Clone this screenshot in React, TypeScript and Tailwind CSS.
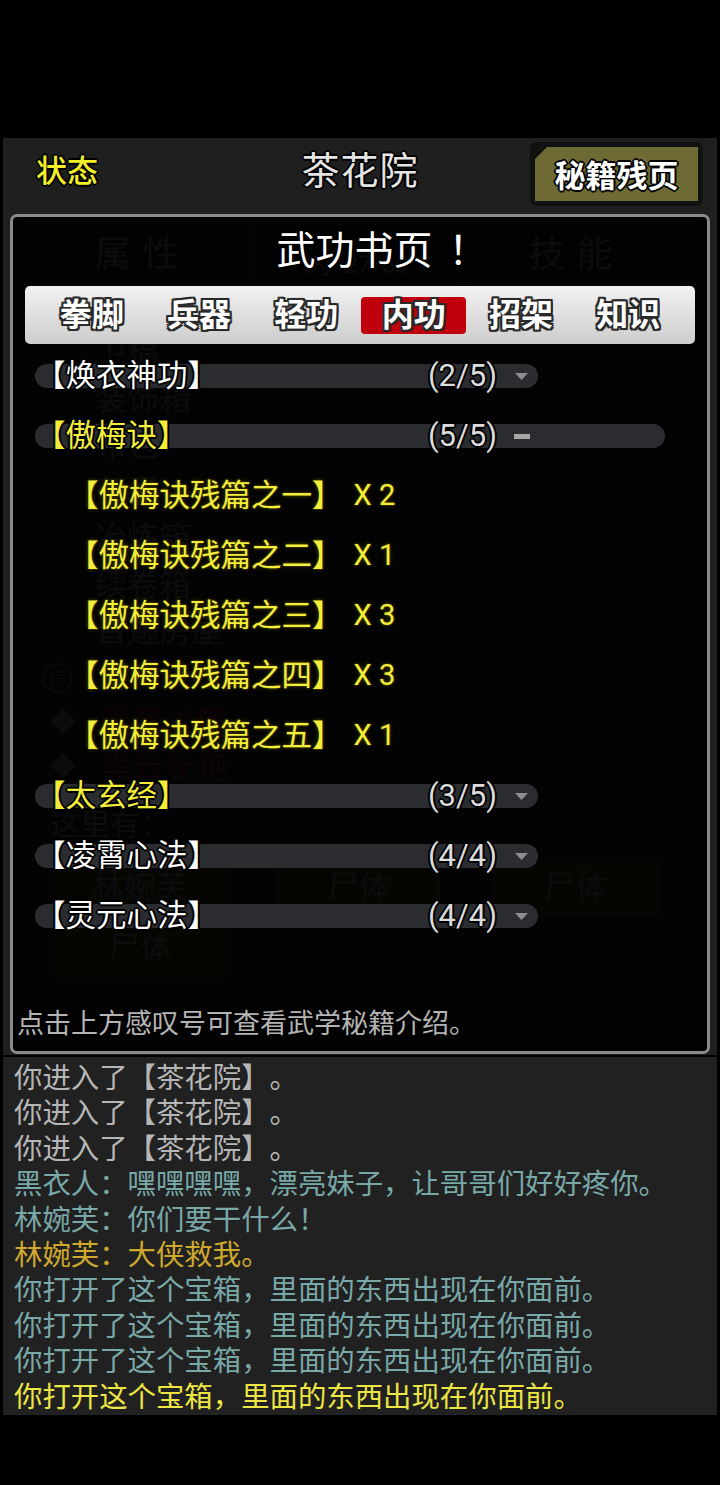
import React from 'react';

// outlines
const OUT_BLACK =
  '[text-shadow:2px_0_0_#000,-2px_0_0_#000,0_2px_0_#000,0_-2px_0_#000,1px_1px_0_#000,-1px_-1px_0_#000,1px_-1px_0_#000,-1px_1px_0_#000]';
const OUT_TAB =
  '[text-shadow:2px_0_0_#2a2a2a,-2px_0_0_#2a2a2a,0_2px_0_#2a2a2a,0_-2px_0_#2a2a2a,2px_2px_0_#2a2a2a,-2px_-2px_0_#2a2a2a,2px_-2px_0_#2a2a2a,-2px_2px_0_#2a2a2a,0_0_3px_#2a2a2a]';
const OUT_SOFT =
  '[text-shadow:1px_0_0_#000,-1px_0_0_#000,0_1px_0_#000,0_-1px_0_#000,0_0_3px_#000]';
const OUT_YELLOW =
  '[text-shadow:1px_0_0_#2b2600,-1px_0_0_#2b2600,0_1px_0_#2b2600,0_-1px_0_#2b2600,0_0_4px_#4a4200]';

const TABS = ['拳脚', '兵器', '轻功', '内功', '招架', '知识'];

type Row = { name: string; count: string; yellow: boolean; open?: boolean; subs?: [string, string][] };

const ROWS: Row[] = [
  { name: '【焕衣神功】', count: '(2/5)', yellow: false },
  {
    name: '【傲梅诀】',
    count: '(5/5)',
    yellow: true,
    open: true,
    subs: [
      ['一', '2'],
      ['二', '1'],
      ['三', '3'],
      ['四', '3'],
      ['五', '1'],
    ],
  },
  { name: '【太玄经】', count: '(3/5)', yellow: true },
  { name: '【凌霄心法】', count: '(4/4)', yellow: false },
  { name: '【灵元心法】', count: '(4/4)', yellow: false },
];

const LOG: { text: string; color: string }[] = [
  { text: '你进入了【茶花院】。', color: 'text-[#b6b6b6]' },
  { text: '你进入了【茶花院】。', color: 'text-[#b6b6b6]' },
  { text: '你进入了【茶花院】。', color: 'text-[#b6b6b6]' },
  { text: '黑衣人：嘿嘿嘿嘿，漂亮妹子，让哥哥们好好疼你。', color: 'text-[#79a8a8]' },
  { text: '林婉芙：你们要干什么！', color: 'text-[#79a8a8]' },
  { text: '林婉芙：大侠救我。', color: 'text-[#cfa92e]' },
  { text: '你打开了这个宝箱，里面的东西出现在你面前。', color: 'text-[#79a8a8]' },
  { text: '你打开了这个宝箱，里面的东西出现在你面前。', color: 'text-[#79a8a8]' },
  { text: '你打开了这个宝箱，里面的东西出现在你面前。', color: 'text-[#79a8a8]' },
  { text: '你打开这个宝箱，里面的东西出现在你面前。', color: 'text-[#ece544]' },
];

const Caret = () => (
  <svg width="13" height="7" viewBox="0 0 13 7" className="ml-[1px]">
    <path d="M0 0 L13 0 L6.5 7 Z" fill="#8e8e8e" />
  </svg>
);

const SkillRow = ({ row }: { row: Row }) => (
  <div className="h-[60px] flex items-center">
    <div
      className={`ml-[22px] h-[24px] rounded-full bg-[#2a2c30] flex items-center ${row.open ? 'w-[630px]' : 'w-[503px]'}`}
    >
      <span
        className={`w-[393px] shrink-0 text-[30.5px] leading-[24px] whitespace-nowrap ${row.yellow ? 'text-[#f3ee3c]' : 'text-white'} ${OUT_BLACK}`}
      >
        {row.name}
      </span>
      <span className={`w-[86px] shrink-0 text-[31px] leading-[24px] text-[#dcdcdc] ${OUT_BLACK}`}>{row.count}</span>
      {row.open ? <span className="block w-[16px] h-[5px] bg-[#a8a8a8]" /> : <Caret />}
    </div>
  </div>
);

const SubRow = ({ part, n }: { part: string; n: string }) => (
  <div className={`h-[60px] flex items-center pl-[55px] text-[30.5px] text-[#f3ee3c] whitespace-nowrap ${OUT_YELLOW}`}>
    <span>{`【傲梅诀残篇之${part}】`}</span>
    <span className="ml-[11px] text-[29px]">{`X ${n}`}</span>
  </div>
);

// faint game screen lying under the dialog
const Underlay = () => (
  <div className="text-[#777]">
    <div className="pt-[10px] pl-[32px] flex gap-[5px]">
      <div className="w-[215px] h-[62px] bg-[#1c1c1c] border border-[#333] flex items-center justify-center text-[36px] tracking-[12px]">
        属性
      </div>
      <div className="w-[205px] h-[62px] bg-[#1c1c1c] border border-[#333] flex items-end justify-center gap-[14px] text-[24px] pb-[2px]">
        <span>内</span>
        <span>27/50</span>
      </div>
      <div className="w-[223px] h-[62px] bg-[#1c1c1c] border border-[#333] flex items-center justify-center text-[36px] tracking-[12px]">
        技能
      </div>
    </div>
    <div className="mt-[43px] pl-[92px] text-[32px]">
      {['卫棉', '装饰箱', '布包', '药囊', '冶炼箱', '续卷箱', '晋迦房屋'].map((t, i) => (
        <div key={i} className="h-[46.5px] flex items-center">
          {t}
        </div>
      ))}
    </div>
    <div className="h-[46px] flex items-center pl-[39px]">
      <span className="w-[30px] h-[30px] rounded-full border-2 border-[#7a6430] text-[#7a6430] text-[16px] flex items-center justify-center">
        持
      </span>
    </div>
    <div className="h-[44px] flex items-center pl-[47px] gap-[24px] text-[32px] text-[#901c1c]">
      <span className="text-[#777] text-[26px]">◆</span>
      <span>黑莲斗篷</span>
    </div>
    <div className="h-[44px] flex items-center pl-[47px] gap-[24px] text-[32px] text-[#803232]">
      <span className="text-[#777] text-[26px]">◆</span>
      <span>黑云长袍</span>
    </div>
    <div className="mt-[10px] pt-[3px] pl-[47px] text-[30px]">这里有：</div>
    <div className="mt-[12px] pl-[52px] flex gap-[53px] text-[32px]">
      <div className="w-[170px] h-[57px] bg-[#363614] border border-[#4a4a4a] flex items-center justify-center">林婉芙</div>
      <div className="w-[162px] h-[57px] bg-[#363614] border border-[#4a4a4a] flex items-center justify-center">尸体</div>
      <div className="w-[165px] h-[57px] bg-[#363614] border border-[#4a4a4a] flex items-center justify-center">尸体</div>
    </div>
    <div className="mt-[4px] pl-[52px] text-[32px]">
      <div className="w-[170px] h-[57px] bg-[#363614] border border-[#4a4a4a] flex items-center justify-center">尸体</div>
    </div>
  </div>
);

export default function App() {
  return (
    <div
      className="w-[720px] h-[1485px] bg-black overflow-hidden [text-spacing-trim:space-all]"
      style={{ fontFamily: 'Roboto, "Noto Sans CJK SC", "Noto Sans", sans-serif' }}
    >
      <div className="h-[138px]" />

      <div className="mx-[3px] bg-[#1f1f1f]">
        {/* header */}
        <div className="h-[76px] grid grid-cols-[1fr_auto_1fr] items-center">
          <div className={`pl-[33px] -mt-[8px] text-[31px] font-medium text-[#f2ee2a] ${OUT_BLACK}`}>状态</div>
          <div className={`text-[38px] text-[#e4e4e4] tracking-[1px] -mt-[10px] ${OUT_BLACK}`}>茶花院</div>
          <div className="flex justify-end pr-[14px]">
            <div className="w-[173px] h-[64px] bg-[#111] rounded-[6px] p-[5px] -mt-[4px]">
              <div className="w-full h-full bg-[#6d6b33] [clip-path:polygon(12px_0,100%_0,100%_100%,0_100%,0_12px)] flex items-center justify-center">
                <span className={`text-[31px] font-bold text-white mt-[6px] ${OUT_BLACK}`}>秘籍残页</span>
              </div>
            </div>
          </div>
        </div>

        {/* body with the dialog on top */}
        <div className="relative h-[841px] overflow-hidden">
          <Underlay />

          <div className="absolute top-0 left-[7px] w-[700px] h-[840px] border-[3px] border-[#8b8b8b] rounded-[7px] bg-black/[0.9]">
            <div className={`h-[69px] flex items-center justify-center pl-[44px] text-[39px] text-white ${OUT_BLACK}`}>
              <span>武功书页</span>
              <span className="ml-[16px]">！</span>
            </div>

            <div className="mx-[12px] h-[58px] rounded-[5px] bg-gradient-to-b from-[#f2f2f2] to-[#cdcdcd] grid grid-cols-6 px-[13px] items-center">
              {TABS.map((t) => (
                <div
                  key={t}
                  className={`h-[37px] mx-[1px] rounded-[4px] flex items-center justify-center text-[32px] font-bold text-white ${OUT_TAB} ${t === '内功' ? 'bg-[#c0000c]' : ''}`}
                >
                  {t}
                </div>
              ))}
            </div>

            <div className="mt-[2px]">
              {ROWS.map((r) => (
                <React.Fragment key={r.name}>
                  <SkillRow row={r} />
                  {r.subs?.map(([p, n]) => <SubRow key={p} part={p} n={n} />)}
                </React.Fragment>
              ))}
            </div>

            <div className={`mt-[63px] pl-[4px] text-[27px] leading-[30px] text-[#b4b4b4] ${OUT_SOFT}`}>
              点击上方感叹号可查看武学秘籍介绍。
            </div>
          </div>
        </div>
      </div>

      {/* message log */}
      <div className="mx-[3px] mt-[2px] h-[358px] bg-[#212121] px-[11px] pt-[4px] text-[28.4px] leading-[35.4px] whitespace-nowrap">
        {LOG.map((l, i) => (
          <div key={i} className={l.color}>
            {l.text}
          </div>
        ))}
      </div>
    </div>
  );
}
